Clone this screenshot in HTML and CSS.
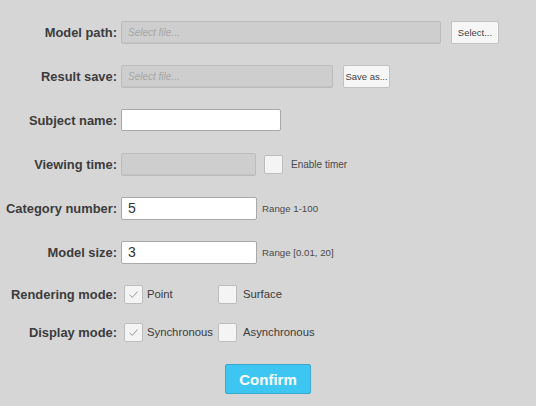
FILE: index.html
```html
<!DOCTYPE html>
<html>
<head>
<meta charset="utf-8">
<link rel="stylesheet" href="styles.css">
</head>
<body>
<div class="form">
  <div class="row">
    <label class="lbl">Model path:</label>
    <div class="field disabled w-path"><span class="ph">Select file...</span></div>
    <button class="btn btn-select">Select...</button>
  </div>
  <div class="row">
    <label class="lbl">Result save:</label>
    <div class="field disabled w-save"><span class="ph">Select file...</span></div>
    <button class="btn btn-save">Save as...</button>
  </div>
  <div class="row">
    <label class="lbl">Subject name:</label>
    <div class="field w-name"></div>
  </div>
  <div class="row">
    <label class="lbl">Viewing time:</label>
    <div class="field disabled w-time"></div>
    <span class="check check-timer"></span>
    <span class="hint hint-timer">Enable timer</span>
  </div>
  <div class="row">
    <label class="lbl">Category number:</label>
    <div class="field w-num"><span class="val">5</span></div>
    <span class="hint">Range 1-100</span>
  </div>
  <div class="row">
    <label class="lbl">Model size:</label>
    <div class="field w-num"><span class="val">3</span></div>
    <span class="hint">Range [0.01, 20]</span>
  </div>
  <div class="row row-render">
    <label class="lbl">Rendering mode:</label>
    <span class="check on first"><svg viewBox="0 0 19 19" width="19" height="19"><path d="M5.5 9.8 L8.3 12.4 L13.4 6.6" fill="none" stroke="#9a9a9a" stroke-width="1"/></svg></span>
    <span class="opt">Point</span>
    <span class="check"></span>
    <span class="opt opt-last">Surface</span>
  </div>
  <div class="row row-display">
    <label class="lbl">Display mode:</label>
    <span class="check on first"><svg viewBox="0 0 19 19" width="19" height="19"><path d="M5.5 9.8 L8.3 12.4 L13.4 6.6" fill="none" stroke="#9a9a9a" stroke-width="1"/></svg></span>
    <span class="opt">Synchronous</span>
    <span class="check"></span>
    <span class="opt opt-last">Asynchronous</span>
  </div>
  <div class="actions">
    <button class="confirm">Confirm</button>
  </div>
</div>
</body>
</html>
```
FILE: styles.css
```css
html, body {
  margin: 0;
  padding: 0;
  background: #d6d6d6;
  width: 536px;
  height: 406px;
  overflow: hidden;
  font-family: "Liberation Sans", Arial, sans-serif;
}
.form {
  padding-top: 10px;
}
.row {
  display: flex;
  align-items: center;
  height: 44px;
}
.row-render { height: 40px; }
.row-display { height: 36px; }
.lbl {
  width: 118px;
  text-align: right;
  font-weight: bold;
  font-size: 12.9px;
  color: #3c3c3c;
  padding-right: 1px;
  box-sizing: border-box;
  white-space: nowrap;
}
.field {
  box-sizing: border-box;
  height: 23px;
  background: #ffffff;
  border: 1px solid #a9a9a9;
  border-radius: 2px;
  margin-left: 3px;
  display: flex;
  align-items: center;
  padding-left: 6px;
}
.field.disabled {
  background: #cecece;
  border-color: #bcbcbc;
  box-shadow: inset 0 -1px 0 #c4c4c4;
}
.w-path { width: 320px; }
.w-save { width: 212px; }
.w-name { width: 160px; height: 22px; }
.w-time { width: 135px; }
.w-num { width: 136px; }
.ph {
  font-style: italic;
  font-size: 10px;
  color: #a6a6a6;
}
.val {
  font-size: 14px;
  color: #333;
}
.btn {
  box-sizing: border-box;
  height: 23px;
  background: #f6f6f6;
  border: 1px solid #c2c2c2;
  border-radius: 2px;
  font-family: "Liberation Sans", Arial, sans-serif;
  font-size: 9.5px;
  color: #444;
  padding: 0;
}
.btn-select { width: 48px; margin-left: 10px; }
.btn-save { width: 47px; margin-left: 10px; }
.check {
  box-sizing: border-box;
  width: 19px;
  height: 19px;
  background: #f4f4f4;
  border: 1px solid #bdbdbd;
  border-radius: 2px;
  display: inline-block;
  position: relative;
  margin-left: 3px;
}
.check.first { margin-left: 6px; }
.check svg { position: absolute; left: -1px; top: -1px; }
.check-timer { margin-left: 8px; }
.hint {
  font-size: 9.7px;
  color: #4a4a4a;
  margin-left: 5px;
}
.hint-timer { margin-left: 8px; font-size: 10px; }
.opt {
  font-size: 11.3px;
  color: #3c3c3c;
  margin-left: 4px;
  width: 68px;
}
.opt-last { margin-left: 6px; }
.actions {
  display: flex;
  padding-left: 225px;
  margin-top: 14px;
}
.confirm {
  box-sizing: border-box;
  width: 86px;
  height: 30px;
  background: #3ec6f2;
  border: 1px solid #39a9cf;
  border-radius: 2px;
  color: #ffffff;
  font-family: "Liberation Sans", Arial, sans-serif;
  font-weight: bold;
  font-size: 15px;
  padding: 0;
}
```
